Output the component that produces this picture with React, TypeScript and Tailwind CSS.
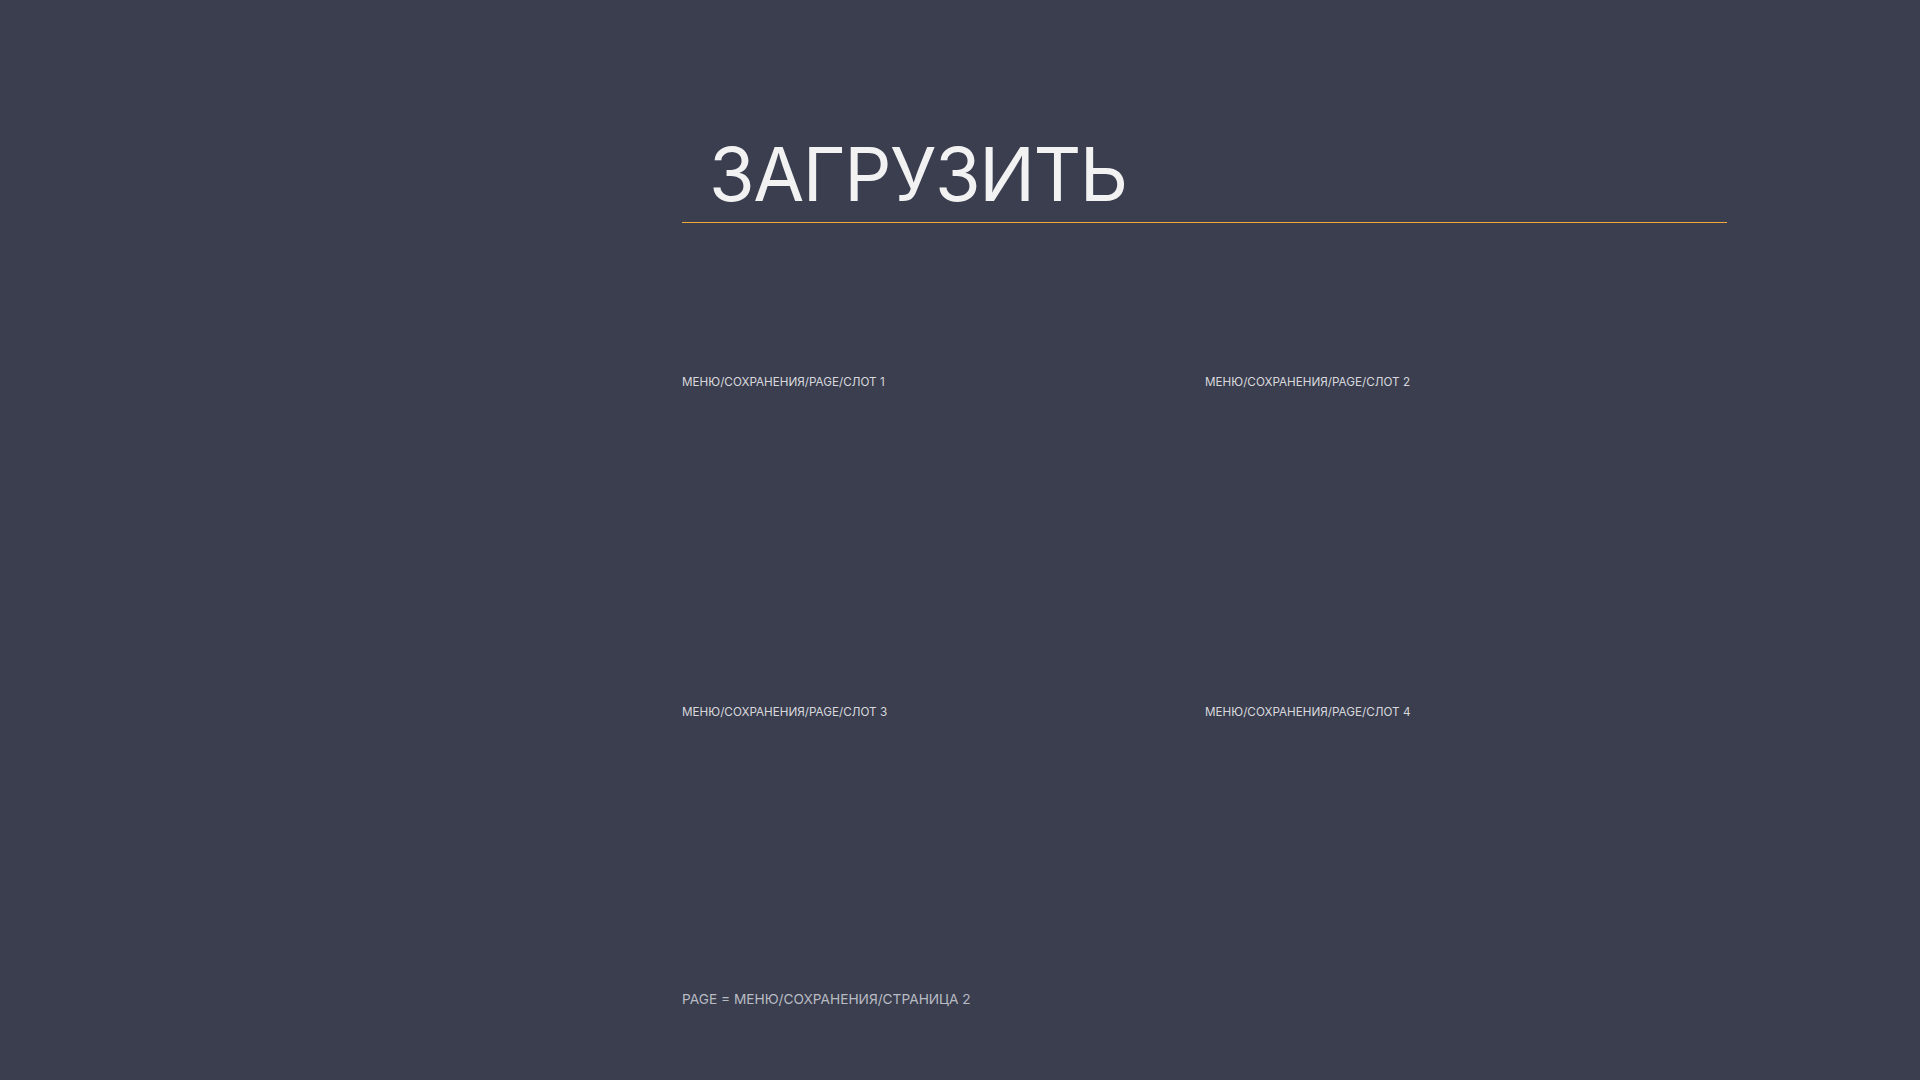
const slots = [1, 2, 3, 4];

export default function App() {
  return (
    <div
      className="min-h-screen w-full bg-[#3a3e4f] text-[#f2f2f2]"
      style={{ fontFamily: 'Inter, "Noto Sans", sans-serif' }}
    >
      <div className="ml-[682px] w-[1045px] pt-[137px]">
        <div className="border-b border-[#f5a83a] pb-[11px]">
          <h1 className="pl-[27px] text-[74px] font-normal leading-none tracking-[-0.02em]">ЗАГРУЗИТЬ</h1>
        </div>

        <div className="mt-[154px] grid grid-cols-2 gap-x-[1px]">
          {slots.map((n) => (
            <div key={n} className="h-[330px]">
              <p className="text-[11.7px] leading-none text-[#d8d8dc]">
                МЕНЮ/СОХРАНЕНИЯ/PAGE/СЛОТ {n}
              </p>
            </div>
          ))}
        </div>

        <p className="mt-[-44px] text-[13.7px] leading-none text-[#b9bbc3]">
          PAGE = МЕНЮ/СОХРАНЕНИЯ/СТРАНИЦА 2
        </p>
      </div>
    </div>
  );
}
